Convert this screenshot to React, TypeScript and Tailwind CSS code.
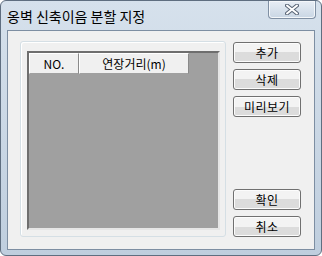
import React from 'react';

const font = { fontFamily: '"Noto Sans CJK KR", "Liberation Sans", sans-serif' };

function Button({ label, className = '' }: { label: string; className?: string }) {
  return (
    <button
      className={`h-[21px] w-[68px] rounded-[3px] border border-[#707070] bg-gradient-to-b from-[#f3f3f3] from-50% to-[#dcdcdc] to-50% text-[12px] leading-none tracking-[0.5px] text-black shadow-[inset_0_0_0_1px_#fcfcfc] ${className}`}
    >
      {label}
    </button>
  );
}

export default function App() {
  return (
    <div
      className="flex h-[256px] w-[322px] flex-col rounded-[6px] border border-[#5f6e80] bg-gradient-to-b from-[#d6e1ec] to-[#bfcede]"
      style={font}
    >
      <div className="flex h-[29px] items-start justify-between">
        <span className="ml-[6px] mt-[6px] text-[14px] leading-[18px] text-black">옹벽 신축이음 분할 지정</span>
        <div className="mr-[5px] flex h-[18px] w-[48px] items-center justify-center rounded-b-[4px] border border-t-0 border-[#8090a4] bg-gradient-to-b from-[#e8eef5] to-[#c9d6e4] shadow-[inset_0_0_0_1px_#f4f7fa]">
          <svg width="14" height="11" viewBox="0 0 14 11">
            <path d="M2 1.5 L12 9.5 M12 1.5 L2 9.5" stroke="#5a6677" strokeWidth="4" strokeLinecap="round" />
            <path d="M2 1.5 L12 9.5 M12 1.5 L2 9.5" stroke="#ffffff" strokeWidth="2" strokeLinecap="round" />
          </svg>
        </div>
      </div>
      <div className="mx-[6px] flex h-[220px] border border-[#7d8ea2] bg-[#f0f0f0] pl-[12px] pt-[10px]">
        <div className="h-[196px] w-[206px] rounded-[3px] border border-[#d5dfe5] shadow-[inset_1px_1px_0_#ffffff]">
          <div className="ml-[6px] mt-[9px] h-[179px] w-[193px] border-2 border-t-[#6e6e6e] border-l-[#6e6e6e] border-r-[#e6e6e6] border-b-[#e6e6e6] bg-[#a0a0a0]">
            <div className="flex h-[21px] text-[12px] text-black">
              <div className="flex w-[50px] items-center justify-center border-b border-r border-l border-t border-b-[#a0a0a0] border-r-[#8a8a8a] border-l-white border-t-white bg-[#f0f0f0]">
                NO.
              </div>
              <div className="flex w-[110px] items-center justify-center border border-b-[#a0a0a0] border-r-[#8a8a8a] border-l-white border-t-white bg-[#f0f0f0]">
                연장거리(m)
              </div>
            </div>
          </div>
        </div>
        <div className="ml-[7px] mt-[1px] flex flex-col gap-[6px]">
          <Button label="추가" />
          <Button label="삭제" />
          <Button label="미리보기" />
          <Button label="확인" className="mt-[66px]" />
          <Button label="취소" />
        </div>
      </div>
    </div>
  );
}
